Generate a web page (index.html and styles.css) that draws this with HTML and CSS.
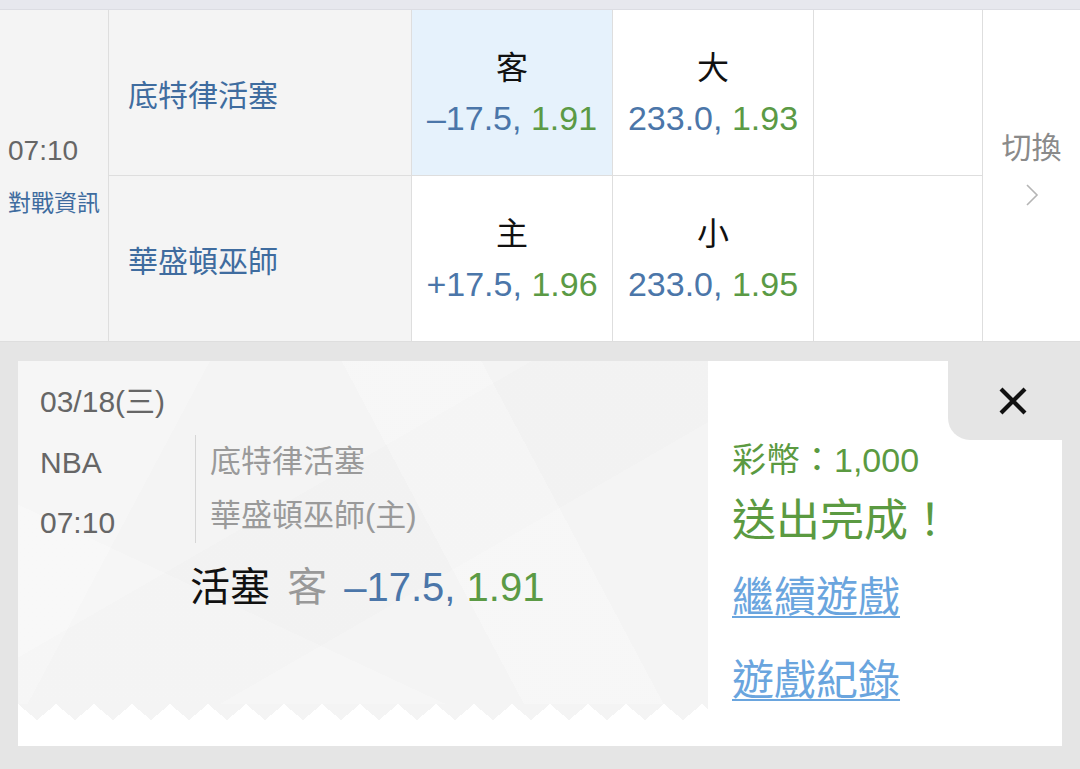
FILE: index.html
```html
<!DOCTYPE html>
<html lang="zh-Hant">
<head>
    <meta charset="UTF-8">
    <meta name="viewport" content="width=device-width, initial-scale=1.0">
    <title>投注完成</title>
    <link rel="stylesheet" href="styles.css">
</head>
<body>
    <div class="top-strip"></div>

    <div class="board">
        <div class="cell time-cell">
            <div class="time">07:10</div>
            <a class="info" href="#">對戰資訊</a>
        </div>
        <div class="cell team">底特律活塞</div>
        <div class="cell odds selected">
            <div class="side">客</div>
            <div class="line"><span class="point">–17.5,</span> <span class="rate">1.91</span></div>
        </div>
        <div class="cell odds">
            <div class="side">大</div>
            <div class="line"><span class="point">233.0,</span> <span class="rate">1.93</span></div>
        </div>
        <div class="cell odds"></div>
        <div class="cell switch">
            <div class="switch-label">切換</div>
            <svg class="chevron" width="14" height="24" viewBox="0 0 14 24">
                <polyline points="2,2 12,12 2,22" fill="none" stroke="#b5b5b5" stroke-width="1.6"/>
            </svg>
        </div>
        <div class="cell team">華盛頓巫師</div>
        <div class="cell odds">
            <div class="side">主</div>
            <div class="line"><span class="point">+17.5,</span> <span class="rate">1.96</span></div>
        </div>
        <div class="cell odds">
            <div class="side">小</div>
            <div class="line"><span class="point">233.0,</span> <span class="rate">1.95</span></div>
        </div>
        <div class="cell odds"></div>
    </div>

    <div class="receipt">
        <div class="ticket">
            <div class="ticket-body">
                <div class="date">03/18(三)</div>
                <div class="match">
                    <div class="meta">
                        <div class="league">NBA</div>
                        <div class="kickoff">07:10</div>
                    </div>
                    <div class="teams">
                        <div>底特律活塞</div>
                        <div>華盛頓巫師(主)</div>
                    </div>
                </div>
                <div class="pick">
                    <span class="pick-team">活塞</span>
                    <span class="pick-side">客</span>
                    <span class="point">–17.5,</span>
                    <span class="rate">1.91</span>
                </div>
            </div>
            <div class="zigzag"></div>
        </div>

        <div class="result">
            <a class="close" href="#">
                <svg width="30" height="30" viewBox="0 0 30 30">
                    <path d="M3 3 L27 27 M27 3 L3 27" stroke="#111" stroke-width="4.2"/>
                </svg>
            </a>
            <div class="result-body">
                <div class="coins">彩幣：1,000</div>
                <div class="done">送出完成！</div>
                <a class="link" href="#">繼續遊戲</a>
                <a class="link" href="#">遊戲紀錄</a>
            </div>
        </div>
    </div>
</body>
</html>
```

FILE: styles.css
```css
body {
    margin: 0;
    padding: 0;
    background-color: #e5e5e5;
    font-family: "Liberation Sans", "Noto Sans CJK TC", sans-serif;
    color: #111;
}
a {
    text-decoration: none;
}

.top-strip {
    height: 9px;
    background-color: #e7e8ee;
    border-bottom: 1px solid #dcdde3;
}

/* odds board */
.board {
    display: grid;
    grid-template-columns: 109px 303px 201px 201px 169px 1fr;
    grid-template-rows: 166px 166px;
    background-color: #fff;
}
.cell {
    box-sizing: border-box;
    border-right: 1px solid #dedede;
    border-bottom: 1px solid #dedede;
}
.time-cell {
    grid-row: span 2;
    background-color: #f4f4f4;
    display: flex;
    flex-direction: column;
    justify-content: center;
    padding: 0 0 0 8px;
}
.time {
    font-size: 28px;
    line-height: 36px;
    color: #666;
}
.info {
    font-size: 23px;
    line-height: 32px;
    color: #3f6c9f;
    margin-top: 18px;
}
.team {
    background-color: #f4f4f4;
    display: flex;
    align-items: center;
    padding-left: 19px;
    font-size: 30px;
    color: #3f6c9f;
}
.odds {
    display: flex;
    flex-direction: column;
    justify-content: center;
    align-items: center;
}
.odds.selected {
    background-color: #e6f2fc;
}
.side {
    font-size: 32px;
    line-height: 50px;
    color: #111;
}
.line {
    font-size: 34px;
    line-height: 50px;
    white-space: nowrap;
}
.point {
    color: #4b76a9;
}
.rate {
    color: #5b9a45;
}
.switch {
    grid-row: span 2;
    border-right: none;
    display: flex;
    flex-direction: column;
    align-items: center;
    justify-content: center;
    padding-bottom: 14px;
}
.switch-label {
    font-size: 30px;
    line-height: 36px;
    color: #8a8a8a;
}
.chevron {
    margin-top: 17px;
}

/* receipt */
.receipt {
    display: flex;
    margin: 19px 18px 23px;
    height: 385px;
    background-color: #fff;
}
.ticket {
    width: 690px;
}
.ticket-body {
    box-sizing: border-box;
    height: 343px;
    padding: 22px 0 0 22px;
    background-color: #f4f4f4;
    background-image:
        linear-gradient(118deg, rgba(255, 255, 255, 0.22) 22%, transparent 22%),
        linear-gradient(62deg, transparent 58%, rgba(255, 255, 255, 0.25) 58%, rgba(255, 255, 255, 0.25) 74%, transparent 74%),
        linear-gradient(150deg, transparent 40%, rgba(0, 0, 0, 0.008) 40%, rgba(0, 0, 0, 0.008) 62%, transparent 62%),
        linear-gradient(25deg, rgba(255, 255, 255, 0.2) 30%, transparent 30%);
}
.zigzag {
    height: 16px;
    background: conic-gradient(from -50deg at 50% 100%, #f4f4f4 100deg, transparent 0) 0 0 / 38px 16px repeat-x;
}
.date {
    font-size: 30px;
    line-height: 38px;
    color: #666;
}
.match {
    display: flex;
    margin-top: 14px;
}
.meta {
    width: 155px;
    font-size: 30px;
    color: #666;
}
.league {
    line-height: 56px;
}
.kickoff {
    line-height: 56px;
    margin-top: 4px;
}
.teams {
    align-self: flex-start;
    border-left: 1px solid #d6d6d6;
    padding-left: 14px;
    font-size: 31px;
    line-height: 54px;
    color: #9a9a9a;
}
.pick {
    margin: 11px 0 0 150px;
    font-size: 40px;
    line-height: 50px;
    white-space: nowrap;
}
.pick-team,
.pick-side {
    margin-right: 6px;
}
.pick-team {
    color: #111;
}
.pick-side {
    color: #999;
}

.result {
    flex: 1;
    display: flex;
    flex-direction: column;
}
.close {
    align-self: flex-end;
    box-sizing: border-box;
    width: 114px;
    height: 79px;
    padding-left: 16px;
    background-color: #e5e5e5;
    border-bottom-left-radius: 22px;
    display: flex;
    align-items: center;
    justify-content: center;
}
.result-body {
    display: flex;
    flex-direction: column;
    align-items: flex-start;
    padding-left: 24px;
}
.coins {
    font-size: 34px;
    line-height: 40px;
    color: #5b9a41;
}
.done {
    margin-top: 13px;
    font-size: 44px;
    line-height: 56px;
    color: #5b9a41;
}
.link {
    margin-top: 21px;
    font-size: 42px;
    line-height: 56px;
    color: #6aa5de;
    text-decoration: underline;
    text-decoration-thickness: 2px;
    text-underline-offset: 4px;
}
.link + .link {
    margin-top: 27px;
}
```
